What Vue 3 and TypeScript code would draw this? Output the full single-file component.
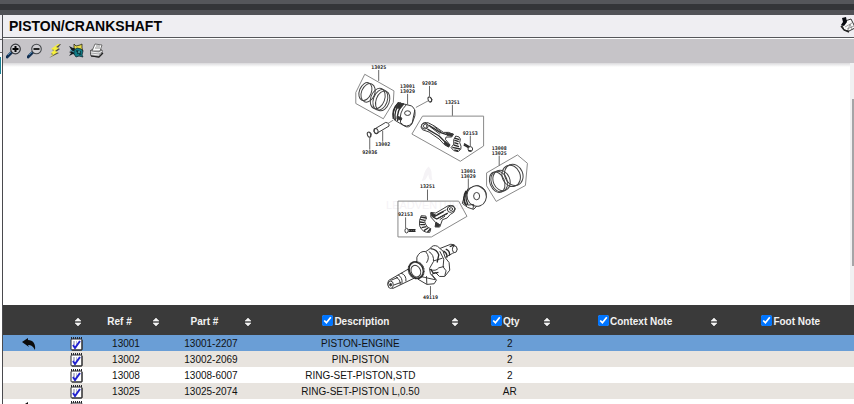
<script setup lang="ts">
import { ref } from 'vue'

interface Column {
  key: string
  label: string
  toggle: boolean
  sortable: boolean
}

interface Part {
  id: number
  refNo: string
  partNo: string
  description: string
  qty: string
  supersedes: boolean
}

interface Callout {
  x: number
  y: number
  lines: string[]
  leader: number
}

const columns = ref<Column[]>([
  { key: 'link', label: '', toggle: false, sortable: false },
  { key: 'pick', label: '', toggle: false, sortable: true },
  { key: 'ref', label: 'Ref #', toggle: false, sortable: true },
  { key: 'part', label: 'Part #', toggle: false, sortable: true },
  { key: 'description', label: 'Description', toggle: true, sortable: true },
  { key: 'qty', label: 'Qty', toggle: true, sortable: true },
  { key: 'context', label: 'Context Note', toggle: true, sortable: true },
  { key: 'foot', label: 'Foot Note', toggle: true, sortable: false },
])

const shown = ref<string[]>(['description', 'qty', 'context', 'foot'])
const selected = ref(1)

const parts: Part[] = [
  { id: 1, refNo: '13001', partNo: '13001-2207', description: 'PISTON-ENGINE', qty: '2', supersedes: true },
  { id: 2, refNo: '13002', partNo: '13002-2069', description: 'PIN-PISTON', qty: '2', supersedes: false },
  { id: 3, refNo: '13008', partNo: '13008-6007', description: 'RING-SET-PISTON,STD', qty: '2', supersedes: false },
  { id: 4, refNo: '13025', partNo: '13025-2074', description: 'RING-SET-PISTON L,0.50', qty: 'AR', supersedes: false },
  { id: 5, refNo: '', partNo: '', description: '', qty: '', supersedes: true },
]

/* y is the baseline of the first line, leader the length of the line below the text */
const callouts: Callout[] = [
  { x: 378, y: 68, lines: ['13025'], leader: 12 },
  { x: 407, y: 87, lines: ['13001', '13029'], leader: 12 },
  { x: 429, y: 84, lines: ['92036'], leader: 12 },
  { x: 452, y: 103, lines: ['13251'], leader: 12 },
  { x: 470, y: 134, lines: ['92153'], leader: 12 },
  { x: 499, y: 149, lines: ['13008', '13025'], leader: 11 },
  { x: 468, y: 172, lines: ['13001', '13029'], leader: 13 },
  { x: 427, y: 188, lines: ['13251'], leader: 12 },
  { x: 405, y: 216, lines: ['92153'], leader: 12 },
]
const calloutsBelow = [
  { x: 382, y: 145, text: '13002', from: 130 },
  { x: 369, y: 153, text: '92036', from: 137 },
  { x: 430, y: 299, text: '49119', from: 286 },
]
</script>

<template>
  <div class="app">
    <div class="frame-top"></div>
    <div class="body">
      <div class="rail"><span class="rail-cell"></span><span class="rail-cell short"></span><span class="rail-tab"></span></div>
      <main class="panel">
        <header class="title-bar">
          <h1>PISTON/CRANKSHAFT</h1>
          <button class="tool cart" type="button" aria-label="Pick list">
            <svg viewBox="0 0 16 16">
              <path d="M5 4 L11 2 L14 8 L15 11 L9 14 L4 13 L2 8 Z" fill="#fafafa" stroke="#333" stroke-width="1" />
              <path d="M5 10 L12 6 M7 12 L14 9 M8 13 L10 7 L12 12" stroke="#888" stroke-width=".8" fill="none" />
              <path d="M2 1 L6 0 L7 5 L4 9 L1 8 L3 5 Z" fill="#080a10" />
              <path d="M1 9 L4 13 L9 15" stroke="#222" stroke-width="1.4" fill="none" />
            </svg>
          </button>
        </header>
        <nav class="toolbar" aria-label="Drawing tools">
          <button class="tool" type="button" aria-label="Zoom in">
            <svg viewBox="0 0 16 16">
              <path d="M1 14 L6 9" stroke="#122f52" stroke-width="3" stroke-linecap="round" />
              <path d="M2 12 L5 9" stroke="#4b83ad" stroke-width="1" />
              <circle cx="9.5" cy="6" r="4.8" fill="#cfced2" stroke="#35383c" stroke-width="1.2" />
              <path d="M9.5 3 V9 M6.5 6 H12.5" stroke="#050505" stroke-width="2" />
            </svg>
          </button>
          <button class="tool" type="button" aria-label="Zoom out">
            <svg viewBox="0 0 16 16">
              <path d="M1 14 L6 9" stroke="#122f52" stroke-width="3" stroke-linecap="round" />
              <path d="M2 12 L5 9" stroke="#4b83ad" stroke-width="1" />
              <circle cx="9.5" cy="6" r="4.8" fill="#cfced2" stroke="#45484c" stroke-width="1.1" />
              <path d="M6.5 6 H12.5" stroke="#111" stroke-width="1.8" />
            </svg>
          </button>
          <button class="tool" type="button" aria-label="Hot spots">
            <svg viewBox="0 0 16 16">
              <path d="M11 1 L4 7 L6 8 L3 11 L5 12 L1 15 L11 10 L8 9 L12 6 L10 5 L13 1 Z" fill="#55534b" />
              <path d="M10 1 L3 6 L6 7 L3 10 L5 11 L2 14 L10 9 L7 8 L11 5 L8 4 L12 1 Z" fill="#f6ef3e" />
            </svg>
          </button>
          <button class="tool" type="button" aria-label="Part finder">
            <svg viewBox="0 0 16 16">
              <path d="M0 3 L4 5 L7 5 V12 L4 11 L0 13 L2 10 L0 9 L3 8 Z" fill="#111b20" />
              <path d="M5 1 L7 3 L11 2 L13 1 L13 5 L14 8 L11 7 L7 7 L5 5 Z" fill="#e8dc49" stroke="#292919" stroke-width=".8" />
              <path d="M5 7 L8 5 L12 6 L14 8 L13 12 L14 14 L10 13 L7 14 L5 11 Z" fill="#107b85" stroke="#102d36" stroke-width=".8" />
              <path d="M7 8 H9 V11 M11 8 V12" stroke="#0b2026" stroke-width="1.2" fill="none" />
              <path d="M1 7 L5 9" stroke="#3c96ac" />
              <path d="M9 9 H11" stroke="#76d2d0" />
            </svg>
          </button>
          <button class="tool" type="button" aria-label="Print">
            <svg viewBox="0 0 16 16">
              <path d="M0 8 L3 6 L12 7 V11 L9 14 L1 13 Z" fill="#a3a3a5" stroke="#444" stroke-width=".9" />
              <path d="M2 8 L5 1 L12 2 L10 8 Z" fill="#fafafa" stroke="#555" stroke-width=".8" />
              <path d="M6 3 H10 M5 5 H10" stroke="#777" stroke-width=".8" />
              <path d="M1 9 L9 10 L12 8 M1 11 L9 12" stroke="#f2f2f2" fill="none" />
              <path d="M1 13 L9 14 L13 10" stroke="#222" stroke-width="1.2" fill="none" />
            </svg>
          </button>
        </nav>

        <section class="viewer" aria-label="Exploded view">
          <svg class="drawing" viewBox="306 62 240 243" role="img" aria-label="Piston and crankshaft">
            <g class="watermark">
              <path d="M428 166 C422 172 424 177 421 180 C426 181 426 176 428 174 C428 178 430 181 432 179 C430 174 433 171 428 166 Z" />
              <text x="426" y="209">LEADVENTURE</text>
            </g>

            <!-- upper ring set, piston, pin and clips -->
            <g class="ink" transform="translate(340 60) scale(.333333)">
              <path class="box" d="M72 40 L160 90 L158 125 L128 174 L45 128 L45 95 Z" />
              <g class="ring">
                <ellipse cx="74" cy="92" rx="18" ry="28" transform="rotate(22 74 92)" />
                <ellipse cx="82" cy="96" rx="20" ry="29" transform="rotate(22 82 96)" />
                <ellipse cx="111" cy="113" rx="21" ry="32" transform="rotate(20 111 113)" />
                <ellipse cx="119" cy="117" rx="21" ry="32" transform="rotate(20 119 117)" />
                <ellipse cx="126" cy="120" rx="20" ry="31" transform="rotate(20 126 120)" />
              </g>
              <path class="hair" d="M142 188 L158 178 M226 140 L263 120" />
              <path class="shape" d="M172 125 L212 135 Q226 142 223 165 L215 188 Q205 205 190 195 L162 178 Q150 160 172 125 Z" />
              <path class="heavy" d="M174 126 Q152 145 158 174 M181 126 Q158 148 164 178 M189 128 Q167 148 171 181" />
              <path d="M197 132 Q174 154 180 186 Q198 206 215 186 L223 147" />
              <path class="dark" d="M174 126 L190 130 L179 143 L165 141 Z" />
              <ellipse class="shape" cx="201" cy="157" rx="9" ry="7" />
              <path class="dark" d="M170 166 L184 172 L182 178 L169 174 Z" />
              <path class="shape" d="M135 185 L103 204 Q96 212 104 218 Q109 219 113 215 L145 196 Q147 187 135 185 Z" />
              <ellipse cx="106" cy="211" rx="6" ry="8" transform="rotate(-20 106 211)" />
              <ellipse cx="85" cy="222" rx="5" ry="8" transform="rotate(-20 85 222)" /><path d="M87 215 L92 219 L88 229" />
              <ellipse cx="268" cy="116" rx="5" ry="8" transform="rotate(-20 268 116)" /><path d="M270 109 L275 117 L270 123" />
            </g>

            <!-- upper connecting rod and right-hand ring set -->
            <g class="ink" transform="translate(405 75) scale(.333333)">
              <path class="box" d="M51 121 H235 V211 L165 257 L19 175 Z" />
              <path class="shape" d="M49 146 Q55 137 70 142 L87 151 L114 170 Q130 167 144 176 L139 184 L122 184 L120 191 L133 207 L130 214 L117 207 L101 190 L71 169 L51 162 Q43 154 49 146 Z" />
              <path class="heavy" d="M69 148 L106 171 L124 177 M66 160 L100 180 L119 199" />
              <ellipse class="shape" cx="58" cy="151" rx="10" ry="9" /><ellipse cx="59" cy="151" rx="5" ry="6" />
              <path d="M74 153 L104 176 M84 151 L107 169" />
              <path class="dark" d="M122 171 L144 175 L139 182 L125 179 Z M119 197 L134 208 L129 214 L116 205 Z" />
              <path class="shape" d="M151 181 Q164 182 165 190 Q160 201 167 212 Q170 222 158 228 Q143 228 137 216 Q149 207 145 192 Z" />
              <path class="heavy" d="M148 187 L162 192 M147 193 L160 198 M147 201 L159 205 M145 208 L161 213 M141 215 L164 220 M147 223 L158 226" />
              <path class="heavy" d="M175 208 L195 219 M176 204 L194 214" /><ellipse class="shape" cx="195" cy="220" rx="7" ry="7" /><path class="heavy" d="M189 225 L198 226" />

              <path class="box" d="M337 238 L367 263 L361 330 L273 378 L244 331 V292 Z" />
              <g class="ring">
                <ellipse cx="276" cy="320" rx="22" ry="32" transform="rotate(-22 276 320)" />
                <ellipse cx="282" cy="318" rx="24" ry="32" transform="rotate(-22 282 318)" />
                <ellipse cx="289" cy="315" rx="25" ry="32" transform="rotate(-22 289 315)" />
                <ellipse cx="318" cy="301" rx="27" ry="33" transform="rotate(-22 318 301)" />
                <ellipse cx="326" cy="298" rx="27" ry="33" transform="rotate(-22 326 298)" />
              </g>
            </g>

            <!-- lower piston and connecting rod -->
            <g class="ink" transform="translate(380 165) scale(.333333)">
              <path class="box" d="M52 107 H235 L260 153 L153 215 H52 Z" />
              <path class="shape" d="M264 70 L291 60 Q314 65 318 84 Q320 105 297 114 L280 132 L262 126 L246 114 L253 88 Z" />
              <ellipse class="shape" cx="289" cy="92" rx="29" ry="31" transform="rotate(-20 289 92)" />
              <ellipse cx="289" cy="92" rx="9" ry="11" />
              <path class="heavy" d="M264 70 Q249 89 263 118 M257 76 Q244 96 259 121 M252 90 Q247 104 256 118" />
              <path d="M249 112 L264 119 L280 117 L278 131" />
              <path class="shape" d="M151 141 L166 143 L188 130 L203 121 Q220 117 225 130 Q223 143 210 147 L200 158 L186 163 L178 185 L164 185 L166 172 L151 155 Z" />
              <path class="heavy" d="M151 142 L167 151 L190 138 M166 171 L178 180 M157 155 L169 161 L202 143" />
              <ellipse class="shape" cx="212" cy="131" rx="11" ry="9" transform="rotate(-20 212 131)" /><ellipse cx="212" cy="131" rx="5" ry="4" />
              <path d="M170 147 L198 133 M172 159 L200 145 M178 163 L194 152" />
              <path class="dark" d="M152 143 L166 150 L163 156 L154 153 Z M166 173 L178 178 L175 184 L165 183 Z" />
              <path class="shape" d="M122 151 L136 152 L138 161 Q129 166 136 178 Q140 188 151 190 L148 201 Q126 204 117 181 Q115 163 122 151 Z" />
              <path class="heavy" d="M121 155 L137 158 M119 162 L133 165 M118 170 L132 172 M119 178 L134 178 M123 187 L138 184 M130 196 L143 188 M141 200 L149 192" />
              <ellipse class="shape" cx="78" cy="196" rx="5" ry="7" /><path class="heavy" d="M84 193 L105 193 M84 198 L105 198 M89 192 V199 M95 192 V199 M101 192 V199" />
            </g>

            <!-- crankshaft -->
            <g class="ink" transform="translate(375 235) scale(.333333)">
              <path class="shape" d="M226 27 Q241 27 245 42 Q244 52 232 54 L188 79 L170 49 Z" />
              <path class="shape" d="M164 40 Q172 27 186 33 L203 48 Q207 70 221 82 L223 105 L208 124 L192 124 L180 112 L169 118 L183 135 L176 146 L154 148 L127 132 L107 105 L124 83 L124 66 Q133 46 151 49 Z" />
              <path d="M160 49 Q176 58 174 79 L162 100 L165 116 L180 133 M151 50 Q165 66 153 83 M193 48 L205 72 L203 95 L212 107 L208 122 M175 77 L201 69 M164 103 Q181 110 190 98 L206 94 M119 120 L148 127 L180 134 M153 123 L154 147" />
              <path class="heavy" d="M165 40 Q185 42 190 59 L185 82 M165 101 L174 115 L189 112" />
              <path class="shape" d="M39 136 L117 91 L139 112 L135 120 L52 160 Q37 158 36 145 Z" />
              <path d="M76 114 Q93 119 91 139 M67 119 Q82 127 79 146 M60 125 Q75 133 74 149 M45 136 L67 127 M54 150 L76 142" />
              <ellipse class="shape" cx="122" cy="105" rx="20" ry="26" transform="rotate(-25 122 105)" />
              <ellipse class="gear" cx="122" cy="105" rx="22" ry="25" transform="rotate(-25 122 105)" />
              <ellipse cx="121" cy="108" rx="14" ry="18" transform="rotate(-25 121 108)" />
              <ellipse class="shape" cx="45" cy="149" rx="8" ry="11" /><ellipse class="dark" cx="45" cy="149" rx="3" ry="4" />
              <path class="heavy" d="M204 47 Q217 54 214 67 M211 42 Q225 48 222 61 M223 34 L237 29" />
              <ellipse class="shape" cx="238" cy="42" rx="7" ry="10" />
            </g>

            <g class="callouts">
              <g v-for="(c, i) in callouts" :key="i">
                <text v-for="(line, n) in c.lines" :key="n" :x="c.x" :y="c.y + n * 5">{{ line }}</text>
                <line
                  :x1="c.x"
                  :x2="c.x"
                  :y1="c.y + (c.lines.length - 1) * 5 + 1"
                  :y2="c.y + (c.lines.length - 1) * 5 + c.leader"
                />
              </g>
              <g v-for="c in calloutsBelow" :key="c.y">
                <text :x="c.x" :y="c.y">{{ c.text }}</text>
                <line :x1="c.x" :x2="c.x" :y1="c.from" :y2="c.y - 4" />
              </g>
            </g>
          </svg>
          <div class="track"><div class="thumb"></div></div>
        </section>

        <table class="parts">
          <colgroup>
            <col v-for="col in columns" :key="col.key" :class="'col-' + col.key" />
          </colgroup>
          <thead>
            <tr>
              <th v-for="col in columns" :key="col.key" scope="col">
                <div class="head">
                  <label v-if="col.toggle" class="name">
                    <input v-model="shown" type="checkbox" :value="col.key" /><span>{{ col.label }}</span>
                  </label>
                  <span v-else-if="col.label" class="name">{{ col.label }}</span>
                  <button v-if="col.sortable" class="sort" type="button" aria-label="Sort">
                    <svg viewBox="0 0 8 8">
                      <path d="M4 0 L7 3 H1 Z M1 5 H7 L4 8 Z" fill="#f4f4f4" stroke="#f4f4f4" stroke-width=".5" />
                      <path d="M1 4 H7" stroke="#888" stroke-width="1" />
                    </svg>
                  </button>
                </div>
              </th>
            </tr>
          </thead>
          <tbody>
            <tr v-for="part in parts" :key="part.id" :class="{ selected: part.id === selected }" @click="selected = part.id">
              <td class="link">
                <button v-if="part.supersedes" class="back" type="button" aria-label="Back">
                  <svg viewBox="0 0 14 12">
                    <path d="M0 4 L6 0 L6 2 C11 2 14 6 13 12 C11 8 9 7 6 7 L7 9 Z" fill="#0c0c0c" />
                  </svg>
                </button>
              </td>
              <td class="pick">
                <button class="add" type="button" aria-label="Add to pick list">
                  <svg viewBox="0 0 13 14">
                    <rect x="1" y="2" width="11" height="11" rx="1" fill="#fff" stroke="#25252b" stroke-width="1" />
                    <path d="M1 1 H12" stroke="#25252b" stroke-width="2" stroke-dasharray="1 1" />
                    <path d="M3 5 H7 M3 7 H7" stroke="#7a7a9c" stroke-width="1" stroke-dasharray="2 1" />
                    <path d="M3 8 L5 11 L10 4" fill="none" stroke="#2222cf" stroke-width="2" />
                    <path d="M12 3 V13 H2" fill="none" stroke="#333" stroke-width="1" />
                  </svg>
                </button>
              </td>
              <td>{{ part.refNo }}</td>
              <td>{{ part.partNo }}</td>
              <td>{{ part.description }}</td>
              <td>{{ part.qty }}</td>
              <td></td>
              <td></td>
            </tr>
          </tbody>
        </table>
      </main>
    </div>
  </div>
</template>

<style>
body {
  overflow: hidden;
  background: #fff;
}
</style>

<style scoped>
.app {
  display: flex;
  flex-direction: column;
  height: 100vh;
  overflow: hidden;
  font-family: 'Liberation Sans', Arial, sans-serif;
  color: #111;
}
.frame-top {
  flex: none;
  height: 6px;
  border-top: 4px solid #55565a;
  border-bottom: 5px solid #505156;
  background: #343538;
}
.body {
  display: flex;
  flex: 1;
  min-height: 0;
}
.rail {
  display: flex;
  flex: none;
  flex-direction: column;
  width: 2px;
  border-right: 1px solid #4a4a4e;
  background: #fff;
}
.rail-cell {
  height: 24px;
  border-bottom: 1px solid #66666a;
  background: #efeef2;
}
.rail-cell.short {
  height: 12px;
}
.rail-tab {
  width: 1px;
  height: 17px;
  margin-top: 4px;
  background: #168094;
}
.panel {
  display: flex;
  flex: 1;
  flex-direction: column;
  min-width: 0;
  overflow: hidden;
}
.title-bar {
  display: flex;
  flex: none;
  align-items: center;
  justify-content: space-between;
  height: 22px;
  padding-left: 6px;
  border-bottom: 1px solid #55565a;
  background: #efeef2;
}
h1 {
  margin: 0;
  font-size: 14px;
  line-height: 22px;
  color: #050505;
}
button {
  padding: 0;
  border: 0;
  background: none;
  cursor: pointer;
}
button svg {
  display: block;
  width: 100%;
  height: 100%;
}
.tool {
  flex: none;
  width: 16px;
  height: 16px;
}
.cart {
  margin-right: -2px;
  margin-bottom: 2px;
}
.toolbar {
  display: flex;
  flex: none;
  align-items: center;
  gap: 5px;
  height: 24px;
  padding: 0 3px;
  border-top: 1px solid #fff;
  background: #c6c4c8;
}
.viewer {
  display: flex;
  flex: none;
  background: linear-gradient(#dad9dc, #fff 4px);
}
.drawing {
  flex: 1;
  min-width: 0;
  height: 242px;
}
.watermark {
  fill: #f5f3f6;
}
.watermark text {
  font: 11px 'Liberation Sans', Arial, sans-serif;
  text-anchor: middle;
}
.ink {
  fill: none;
  stroke: #3a3a3a;
  stroke-width: 3;
  stroke-linejoin: round;
}
.box {
  stroke: #888;
}
.hair {
  stroke: #888;
}
.shape {
  fill: #fff;
}
.ring {
  stroke: #444;
  stroke-width: 3;
}
.heavy {
  stroke: #2a2a2a;
  stroke-width: 4;
}
.dark {
  fill: #333;
}
.gear {
  stroke: #222;
  stroke-width: 6;
  stroke-dasharray: 3 1;
}
.callouts text {
  font: bold 5px 'DejaVu Sans Mono', monospace;
  text-anchor: middle;
  fill: #222;
}
.callouts line {
  stroke: #666;
  stroke-width: 1;
}
.track {
  flex: none;
  width: 4px;
  background: #f1f1f2;
}
.thumb {
  height: 69%;
  margin: 36px 0 0 2px;
  background: #a5a5a7;
}
.parts {
  flex: none;
  width: 100%;
  border-collapse: collapse;
  table-layout: fixed;
  font-size: 10px;
  line-height: 14px;
}
.col-link {
  width: 62px;
}
.col-pick {
  width: 22px;
}
.col-ref {
  width: 78px;
}
.col-part,
.col-qty {
  width: 92px;
}
.col-description {
  width: 24.3%;
}
.col-context {
  width: 19.7%;
}
thead tr {
  height: 30px;
  background: #3a3a3a;
  color: #f2f2f2;
}
th {
  padding: 3px 0 0;
}
th:last-child .head {
  padding-right: 0;
}
.head {
  display: flex;
  align-items: center;
  justify-content: flex-end;
  padding-right: 5px;
}
.name {
  display: flex;
  flex: 1;
  align-items: center;
  justify-content: center;
  gap: 1px;
  white-space: nowrap;
}
.name input {
  width: 11px;
  height: 11px;
  margin: 0 0 3px;
  accent-color: #0075ff;
}
label.name {
  padding-left: 4px;
}
.sort {
  flex: none;
  width: 8px;
  height: 8px;
}
tbody tr {
  background: #fff;
}
tbody tr:nth-child(even) {
  background: #e8e4df;
}
tbody tr.selected {
  background: #6a9ed6;
}
td {
  height: 14px;
  padding: 2px 0 0;
  text-align: center;
  white-space: nowrap;
}
td button {
  display: block;
}
.back {
  width: 14px;
  height: 12px;
  margin-left: 19px;
}
.add {
  width: 13px;
  height: 14px;
  margin-left: 5px;
}
</style>
